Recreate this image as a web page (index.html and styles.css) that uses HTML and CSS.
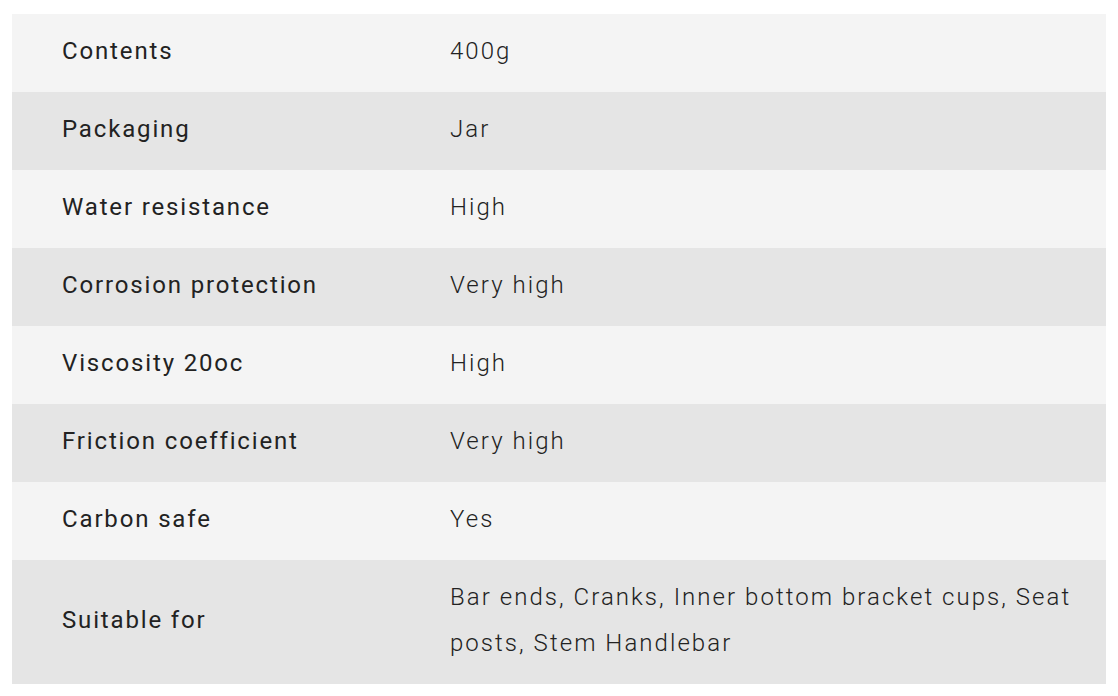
FILE: index.html
```html
<!DOCTYPE html>
<html lang="en">
<head>
<meta charset="utf-8">
<title>Specifications</title>
<link rel="stylesheet" href="styles.css">
</head>
<body>
<table class="specs">
  <tbody>
    <tr><th>Contents</th><td>400g</td></tr>
    <tr><th>Packaging</th><td>Jar</td></tr>
    <tr><th>Water resistance</th><td>High</td></tr>
    <tr><th>Corrosion protection</th><td>Very high</td></tr>
    <tr><th>Viscosity 20oc</th><td>High</td></tr>
    <tr><th>Friction coefficient</th><td>Very high</td></tr>
    <tr><th>Carbon safe</th><td>Yes</td></tr>
    <tr><th>Suitable for</th><td>Bar ends, Cranks, Inner bottom bracket cups, Seat posts, Stem Handlebar</td></tr>
  </tbody>
</table>
</body>
</html>
```

FILE: styles.css
```css
html, body {
  margin: 0;
  padding: 0;
  background: #ffffff;
}
body {
  padding: 14px 12px 12px 12px;
  font-family: Roboto, "Liberation Sans", sans-serif;
}
.specs {
  width: 1094px;
  border-collapse: collapse;
  table-layout: fixed;
}
.specs tr:nth-child(odd) {
  background: #f4f4f4;
}
.specs tr:nth-child(even) {
  background: #e5e5e5;
}
.specs th,
.specs td {
  padding: 14px 20px 18px 50px;
  line-height: 46px;
  font-size: 24px;
  text-align: left;
  vertical-align: middle;
}
.specs th {
  width: 318px;
  font-weight: 400;
  letter-spacing: 1.85px;
  color: #222222;
}
.specs td {
  font-weight: 300;
  letter-spacing: 2.05px;
  color: #222222;
}
```
